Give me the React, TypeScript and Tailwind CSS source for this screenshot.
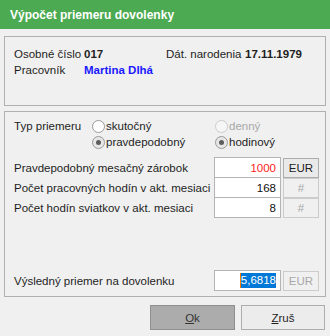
import React from "react";

const font = { fontFamily: '"Liberation Sans", Arial, sans-serif' };

const Radio = ({ checked, disabled }: { checked?: boolean; disabled?: boolean }) => (
  <span
    className={`w-[13px] h-[13px] rounded-full border flex items-center justify-center ${
      disabled ? "border-[#cccccc] bg-[#f6f6f6]" : checked ? "border-[#9a9a9a] bg-[#e6e6e6]" : "border-[#9a9a9a] bg-white"
    }`}
  >
    {checked && <span className="w-[5px] h-[5px] rounded-full bg-[#5c5c5c]" />}
  </span>
);

const FieldRow = ({
  label,
  value,
  unit,
  red,
  unitEnabled,
  first,
}: {
  label: string;
  value: string;
  unit: string;
  red?: boolean;
  unitEnabled?: boolean;
  first?: boolean;
}) => (
  <div className={`flex items-center ${first ? "" : "-mt-px"}`}>
    <span className="w-[200px] text-[#1e1e1e]">{label}</span>
    <div
      className={`w-[67px] h-[21px] border border-[#b4b4b4] bg-white flex items-center justify-end pr-[4px] ${
        red ? "text-[#ff1a1a]" : "text-[#111]"
      }`}
    >
      {value}
    </div>
    <div
      className={`ml-[2px] w-[36px] h-[20px] border flex items-center justify-center ${
        unitEnabled ? "border-[#adadad] bg-[#e9e9e9] text-[#1e1e1e]" : "border-[#cccccc] bg-[#f0f0f0] text-[#a8a8a8]"
      }`}
    >
      {unit}
    </div>
  </div>
);

export default function App() {
  return (
    <div
      className="w-[330px] h-[336px] bg-[#f0f0f0] text-[11.5px] leading-[16px] whitespace-nowrap flex flex-col"
      style={font}
    >
      <div className="h-[29px] bg-[#4caa52] flex items-center pl-[10px] text-white font-bold text-[12px]">
        Výpočet priemeru dovolenky
      </div>

      <div className="mx-[4px] mt-[7px] h-[70px] border border-[#b0b0b0] pl-[9px] pt-[9px] text-[#1e1e1e]">
        <div className="flex">
          <span className="w-[70px]">Osobné číslo</span>
          <span className="w-[82px] font-bold">017</span>
          <span className="w-[79px]">Dát. narodenia</span>
          <span className="font-bold">17.11.1979</span>
        </div>
        <div className="flex">
          <span className="w-[70px]">Pracovník</span>
          <span className="font-bold text-[#1a1aff]">Martina Dlhá</span>
        </div>
      </div>

      <div className="mx-[4px] mt-[5px] h-[186px] border border-[#b0b0b0] pl-[9px] pt-[6px] pb-[5px] flex flex-col text-[#1e1e1e]">
        <div className="flex">
          <span className="w-[78px]">Typ priemeru</span>
          <div className="grid grid-cols-[123px_auto]">
            <label className="flex items-center gap-[1px]">
              <Radio />
              <span>skutočný</span>
            </label>
            <label className="flex items-center gap-[1px] text-[#a8a8a8]">
              <Radio disabled />
              <span>denný</span>
            </label>
            <label className="flex items-center gap-[1px]">
              <Radio checked />
              <span>pravdepodobný</span>
            </label>
            <label className="flex items-center gap-[1px]">
              <Radio checked />
              <span>hodinový</span>
            </label>
          </div>
        </div>

        <div className="mt-[7px]">
          <FieldRow first label="Pravdepodobný mesačný zárobok" value="1000" unit="EUR" red unitEnabled />
          <FieldRow label="Počet pracovných hodín v akt. mesiaci" value="168" unit="#" />
          <FieldRow label="Počet hodín sviatkov v akt. mesiaci" value="8" unit="#" />
        </div>

        <div className="mt-auto flex items-center">
          <span className="w-[200px]">Výsledný priemer na dovolenku</span>
          <div className="w-[67px] h-[21px] border border-[#b4b4b4] bg-white flex items-center justify-end pr-[4px]">
            <span className="border-l border-[#ff7a00] bg-[#0078d7] text-white leading-[15px]">5,6818</span>
          </div>
          <div className="ml-[2px] w-[36px] h-[20px] border border-[#cccccc] bg-[#f0f0f0] text-[#a8a8a8] flex items-center justify-center">
            EUR
          </div>
        </div>
      </div>

      <div className="mt-[8px] mr-[5px] flex justify-end gap-[6px]">
        <button className="w-[85px] h-[25px] border border-[#8f8f8f] bg-[#acacac] text-[#333]">
          <span className="underline">O</span>k
        </button>
        <button className="w-[84px] h-[25px] border border-[#adadad] bg-[#ececec] text-[#1e1e1e]">
          <span className="underline">Z</span>ruš
        </button>
      </div>
    </div>
  );
}
